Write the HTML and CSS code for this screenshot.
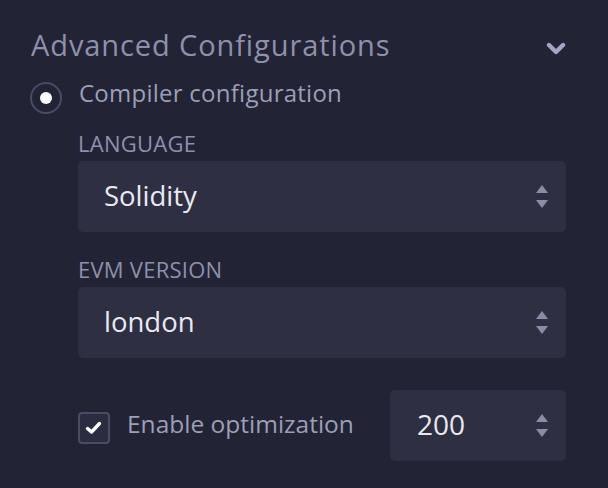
FILE: index.html
```html
<!DOCTYPE html>
<html>
<head>
<meta charset="utf-8">
<link rel="stylesheet" href="styles.css">
</head>
<body>
<div class="panel">
  <div class="header">
    <h2 class="title">Advanced Configurations</h2>
    <svg class="chevron" width="20" height="13" viewBox="0 0 20 13"><path d="M3 3 L10 10 L17 3" fill="none" stroke="#a3a5c3" stroke-width="4.4" stroke-linecap="round" stroke-linejoin="round"/></svg>
  </div>
  <div class="radio-row">
    <span class="radio"><span class="dot"></span></span>
    <span class="radio-label">Compiler configuration</span>
  </div>
  <div class="fields">
    <div class="field">
      <div class="label">LANGUAGE</div>
      <div class="select">
        <span class="value">Solidity</span>
        <svg class="arrows" width="12" height="23" viewBox="0 0 12 23"><path d="M6 0 L12 8 L0 8 Z" fill="#8a8ca8"/><path d="M0 15 L12 15 L6 23 Z" fill="#8a8ca8"/></svg>
      </div>
    </div>
    <div class="field">
      <div class="label">EVM VERSION</div>
      <div class="select">
        <span class="value">london</span>
        <svg class="arrows" width="12" height="23" viewBox="0 0 12 23"><path d="M6 0 L12 8 L0 8 Z" fill="#8a8ca8"/><path d="M0 15 L12 15 L6 23 Z" fill="#8a8ca8"/></svg>
      </div>
    </div>
    <div class="opt-row">
      <span class="checkbox"><svg width="18" height="14" viewBox="0 0 18 14"><path d="M2.5 7.5 L6.5 11 L14.5 2.5" fill="none" stroke="#ffffff" stroke-width="3.4" stroke-linecap="round" stroke-linejoin="round"/></svg></span>
      <span class="opt-label">Enable optimization</span>
      <div class="select number">
        <span class="value num">200</span>
        <svg class="arrows" width="12" height="23" viewBox="0 0 12 23"><path d="M6 0 L12 8 L0 8 Z" fill="#8a8ca8"/><path d="M0 15 L12 15 L6 23 Z" fill="#8a8ca8"/></svg>
      </div>
    </div>
  </div>
</div>
</body>
</html>
```
FILE: styles.css
```css
html, body {
  margin: 0;
  padding: 0;
  background: #222335;
  font-family: "Open Sans", "Noto Sans", sans-serif;
}
.panel {
  padding: 27px 42px 0 31px;
}
.header {
  display: flex;
  align-items: center;
  justify-content: space-between;
  height: 36px;
}
.title {
  margin: 0;
  font-weight: 400;
  font-size: 29px;
  line-height: 36px;
  letter-spacing: 0.9px;
  color: #8e91ab;
}
.chevron {
  margin-top: 7px;
}
.radio-row {
  display: flex;
  align-items: flex-start;
  margin-top: 19px;
  gap: 17px;
}
.radio {
  width: 28px;
  height: 28px;
  flex: none;
  border: 2px solid #4a4c63;
  border-radius: 50%;
  display: flex;
  align-items: center;
  justify-content: center;
  margin-left: -1px;
}
.dot {
  width: 12px;
  height: 12px;
  border-radius: 50%;
  background: #ffffff;
}
.radio-label {
  font-size: 24px;
  line-height: 32px;
  letter-spacing: 0.25px;
  margin-top: -5px;
  color: #9c9fb7;
}
.fields {
  padding-left: 47px;
  margin-top: 16px;
  display: flex;
  flex-direction: column;
  gap: 24px;
}
.label {
  font-size: 22px;
  line-height: 26px;
  letter-spacing: 0.25px;
  margin-bottom: 5px;
  color: #8e91ab;
}
.select {
  display: flex;
  align-items: center;
  justify-content: space-between;
  height: 71px;
  background: #2e2f43;
  border-radius: 5px;
  padding: 0 18px 0 26px;
  box-sizing: border-box;
}
.value {
  font-size: 27.5px;
  padding-bottom: 2px;
  color: #e9e9f1;
}
.value.num {
  font-size: 28px;
  padding-bottom: 4px;
}
.number {
  width: 176px;
  flex: none;
  padding-left: 27px;
}
.opt-row {
  display: flex;
  align-items: center;
  margin-top: 8px;
}
.checkbox {
  width: 32px;
  height: 32px;
  flex: none;
  box-sizing: border-box;
  border: 2px solid #4a4c63;
  border-radius: 4px;
  background: #2b2c3f;
  display: flex;
  align-items: center;
  justify-content: center;
  margin-top: 5px;
}
.opt-label {
  font-size: 24.5px;
  color: #9c9fb7;
  margin-left: 17px;
  margin-bottom: 4px;
  flex: 1;
}
```
